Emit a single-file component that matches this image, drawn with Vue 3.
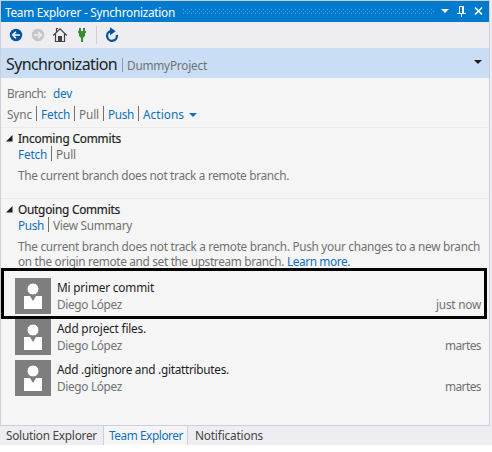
<script setup>
// Adjusts letter spacing so that a label takes the given width in pixels.
const vFit = {
  mounted(el, { value }) {
    const natural = el.getBoundingClientRect().width
    el.style.letterSpacing = (value - natural) / el.textContent.length + 'px'
  },
}

const actions = [
  { label: 'Sync', width: 25, off: true },
  { label: 'Fetch', width: 29 },
  { label: 'Pull', width: 20, off: true },
  { label: 'Push', width: 26 },
  { label: 'Actions', width: 41 },
]
const commits = [
  { title: 'Mi primer commit', width: 97, time: 'just now', timeWidth: 45 },
  { title: 'Add project files.', width: 89, time: 'martes', timeWidth: 36 },
  { title: 'Add .gitignore and .gitattributes.', width: 172, time: 'martes', timeWidth: 36 },
]
const tabs = [
  { label: 'Solution Explorer', width: 91 },
  { label: 'Team Explorer', width: 74, active: true },
  { label: 'Notifications', width: 68 },
]
</script>

<template>
  <div class="window">
    <div class="panel">
      <header class="titlebar">
        <span v-fit="170">Team Explorer - Synchronization</span>
        <svg class="grip" width="252" height="5" fill="none" stroke="#59a8de">
          <path d="M0 .5h252M0 4.5h252" stroke-dasharray="1 3" />
          <path d="M2 2.5h250" stroke-dasharray="1 3" />
        </svg>
        <svg class="controls" width="48" height="21">
          <path d="M0 8h8L4 12z" fill="#fff" />
          <path d="M18.5 12V5.5h4V12M16 12.5h9M20.5 12v4M21.5 6v6" fill="none" stroke="#fff" />
          <path d="M34 6.5l7 7M41 6.5l-7 7" stroke="#fff" stroke-width="1.7" />
        </svg>
      </header>

      <div class="toolbar">
        <svg width="125" height="26">
          <circle cx="15" cy="13" r="6.2" fill="#00539c" />
          <path d="M19 13h-7M15 9.7L11.7 13l3.3 3.3" fill="none" stroke="#fff" stroke-width="1.6" />
          <circle cx="37" cy="13" r="6.2" fill="#c6c6c6" />
          <path d="M33 13h7M37 9.7l3.3 3.3-3.3 3.3" fill="none" stroke="#eeeef2" stroke-width="1.6" />
          <path d="M52.3 13.5L59 6.8l6.7 6.7M54.5 12v7.5h9V12M55.5 10V6.5h1.5" fill="none" stroke="#424242" stroke-width="1.2" />
          <path d="M57 14h4v5h-4z" fill="#424242" />
          <path d="M78 6h2v3h2V6h2v3h1v2h-1v3l-2 2v4h-2v-4l-2-2v-3h-1V9h1z" fill="#388a34" />
          <path d="M95.5 4v18" stroke="#cccedb" />
          <path d="M109.7 9.2A4.9 4.9 0 1 0 115.8 13" fill="none" stroke="#00539c" stroke-width="2.3" />
          <path d="M109 5.3l5.7 4-5.7 4z" fill="#00539c" />
        </svg>
      </div>

      <div class="heading">
        <span v-fit="111" class="page">Synchronization</span>
        <i></i>
        <span v-fit="80" class="project">DummyProject</span>
        <svg class="menu" width="8" height="4"><path d="M0 0h8L4 4z" fill="#1e1e1e" /></svg>
      </div>

      <main>
        <section class="summary">
          <div class="line branch"><span v-fit="39">Branch:</span><a v-fit="19">dev</a></div>
          <div class="line actions">
            <template v-for="(a, n) in actions" :key="a.label">
              <i v-if="n"></i>
              <span v-fit="a.width" :class="{ link: !a.off }">{{ a.label }}</span>
            </template>
            <svg class="caret" width="8" height="4"><path d="M0 0h8L4 4z" fill="#0e70c0" /></svg>
          </div>
        </section>

        <section class="incoming">
          <div class="line title">
            <svg width="7" height="7"><path d="M6.5 0v6.5H0z" fill="#1e1e1e" /></svg>
            <span v-fit="103">Incoming Commits</span>
          </div>
          <div class="line actions"><span v-fit="29" class="link">Fetch</span><i></i><span v-fit="20">Pull</span></div>
          <div class="message"><span v-fit="271">The current branch does not track a remote branch.</span></div>
        </section>

        <section class="outgoing">
          <div class="line title">
            <svg width="7" height="7"><path d="M6.5 0v6.5H0z" fill="#1e1e1e" /></svg>
            <span v-fit="102">Outgoing Commits</span>
          </div>
          <div class="line actions"><span v-fit="26" class="link">Push</span><i></i><span v-fit="79">View Summary</span></div>
          <div class="message">
            <span v-fit="462">The current branch does not track a remote branch. Push your changes to a new branch</span>
            <div class="second"><span v-fit="266">on the origin remote and set the upstream branch.</span><a v-fit="63">Learn more.</a></div>
          </div>
          <ul>
            <li v-for="c in commits" :key="c.title">
              <svg width="36" height="36">
                <path d="M0 0h36v36H0z" fill="#7e7e7e" />
                <path d="M9 18h6l3 5 3-5h6v13H9z" fill="#fff" />
                <circle cx="18" cy="11" r="6" fill="#fff" stroke="#7e7e7e" stroke-width="1" />
              </svg>
              <div class="info">
                <div class="line name"><span v-fit="c.width">{{ c.title }}</span></div>
                <div class="line meta"><span v-fit="65">Diego López</span><span v-fit="c.timeWidth">{{ c.time }}</span></div>
              </div>
            </li>
          </ul>
        </section>
        <div class="highlight"></div>
      </main>
    </div>

    <nav>
      <div v-for="t in tabs" :key="t.label" :class="{ active: t.active }"><span v-fit="t.width">{{ t.label }}</span></div>
    </nav>
  </div>
</template>

<style>
body { margin: 0; background: #fff; }
</style>

<style scoped>
* { box-sizing: border-box; }
.window {
  width: 492px; height: 445px; background: #eeeef2;
  font: 11.8px/16px "Noto Sans", "Open Sans", sans-serif;
  color: #717171; white-space: nowrap;
}
span, a { display: inline-block; flex: none; }
svg { display: block; flex: none; }
.panel { width: 490px; height: 426px; border: 1px solid #cccedb; border-bottom: 0; }
.titlebar { height: 21px; background: #007acc; color: #fff; display: flex; align-items: flex-start; padding-left: 4px; }
.titlebar span { margin-top: 3px; }
.grip { margin: 8px 0 0 8px; }
.controls { margin-left: 6px; }
.toolbar { height: 26px; background: #eeeef2; }
.heading { height: 30px; background: #c9def5; display: flex; padding-left: 5px; }
.page { font-size: 16px; line-height: 20px; color: #1e1e1e; margin-top: 6px; }
.heading i { width: 1px; height: 14px; background: #8e9cb0; margin: 10px 4px 0 5px; }
.project { margin-top: 9px; }
.menu { margin: 12px 7px 0 auto; }
main { position: relative; height: 348px; background: #f5f5f5; border-bottom: 1px solid #cccedb; }
.line { height: 16px; display: flex; }
a, .link { color: #0e70c0; }
.summary { height: 50px; padding: 7px 0 0 6px; border-bottom: 1px solid #ebebed; }
.branch { gap: 7px; margin-bottom: 5px; }
.actions i { width: 1px; height: 15px; background: #717171; margin: 0 4px; }
.caret { margin: 7px 0 0 5px; }
.incoming { height: 71px; padding-top: 2px; border-bottom: 1px solid #ebebed; }
.outgoing { padding-top: 2px; }
.title { color: #1e1e1e; padding-left: 5px; gap: 5px; -webkit-text-stroke: 0.2px #1e1e1e; }
.title svg { margin-top: 5px; }
.incoming .actions, .outgoing .actions { padding-left: 17px; }
.message { margin: 5px 0 0 17px; height: 31px; }
.second { display: flex; gap: 3px; margin-top: -1px; }
ul { list-style: none; margin: 9px 0 0; padding: 0 8px 0 14px; display: grid; gap: 5px; }
li { height: 36px; display: flex; gap: 6px; }
.info { flex: 1; padding-top: 1px; }
.name { color: #1e1e1e; margin-bottom: 1px; }
.meta { justify-content: space-between; }
.highlight { position: absolute; left: 0; top: 190px; width: 486px; height: 51px; border: 3px solid #000; }
nav { height: 19px; display: flex; color: #444; }
nav div { padding: 1px 6px 0; }
nav .active { background: #f5f5f5; color: #0e70c0; border: solid #cccedb; border-width: 0 1px; margin-top: -1px; padding: 2px 4px 0 5px; }
nav div:last-child { padding-left: 7px; }
</style>
